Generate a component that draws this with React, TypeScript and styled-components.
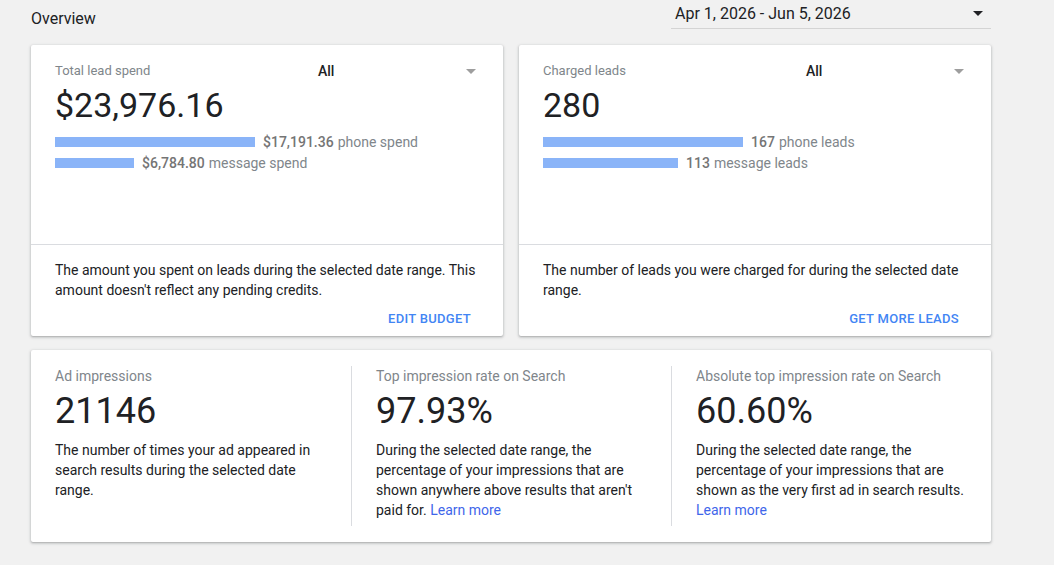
import React from 'react';
import styled, { createGlobalStyle } from 'styled-components';

const GlobalStyle = createGlobalStyle`
  html, body {
    margin: 0;
    padding: 0;
    background: #f1f1f1;
    font-family: Roboto, "Liberation Sans", Arial, sans-serif;
    color: #202124;
  }
`;

const Page = styled.div`
  width: 960px;
  padding: 0 0 0 31px;
  min-height: 565px;
`;

const Header = styled.div`
  display: flex;
  justify-content: space-between;
  align-items: flex-start;
  height: 29px;
`;

const Title = styled.div`
  font-size: 16px;
  line-height: 20px;
  padding-top: 9px;
  color: #202124;
`;

const DateSelect = styled.div`
  width: 320px;
  height: 29px;
  box-sizing: border-box;
  border-bottom: 1px solid #d4d4d4;
  display: flex;
  align-items: center;
  justify-content: space-between;
  padding: 0 8px 1px 4px;
  font-size: 16px;
  color: #202124;
`;

const Caret = styled.span<{ $color: string }>`
  width: 0;
  height: 0;
  border-left: 5px solid transparent;
  border-right: 5px solid transparent;
  border-top: 5px solid ${p => p.$color};
`;

const CardRow = styled.div`
  display: grid;
  grid-template-columns: 472px 472px;
  gap: 16px;
  margin-top: 16px;
`;

const Card = styled.div`
  background: #fff;
  border-radius: 2px;
  box-shadow: 0 1px 2px rgba(60, 64, 67, 0.3), 0 1px 3px 1px rgba(60, 64, 67, 0.12);
`;

const CardTop = styled.div`
  height: 200px;
  box-sizing: border-box;
  padding: 16px 24px 0;
  border-bottom: 1px solid #dadce0;
`;

const TopLine = styled.div`
  display: grid;
  grid-template-columns: 263px 1fr auto;
  align-items: center;
  height: 20px;
`;

const Label = styled.div<{ $size?: number }>`
  font-size: ${p => p.$size ?? 13}px;
  line-height: 20px;
  color: #80868b;
`;

const Filter = styled.div`
  font-size: 14px;
  font-weight: 500;
  color: #202124;
`;

const FilterCaret = styled(Caret)`
  margin-right: 3px;
`;

const BigValue = styled.div<{ $size: number }>`
  font-size: ${p => p.$size}px;
  line-height: ${p => p.$size + 6}px;
  margin-top: 4px;
  color: #202124;
`;

const Bars = styled.div`
  margin-top: 7px;
  display: flex;
  flex-direction: column;
  gap: 1px;
`;

const BarRow = styled.div`
  display: flex;
  align-items: center;
  height: 20px;
  font-size: 14px;
  color: #80868b;
`;

const Bar = styled.div`
  height: 10px;
  background: #8ab4f8;
  margin-right: 8px;
`;

const Strong = styled.b`
  font-weight: 500;
  color: #757575;
  margin-right: 4px;
`;

const CardFooter = styled.div`
  padding: 15px 24px 0;
`;

const Text = styled.p`
  margin: 0;
  font-size: 14px;
  line-height: 20px;
  color: #202124;
`;

const Actions = styled.div`
  display: flex;
  justify-content: flex-end;
`;

const TextButton = styled.button`
  border: none;
  background: none;
  height: 36px;
  padding: 0 8px;
  font-family: inherit;
  font-size: 13px;
  font-weight: 500;
  letter-spacing: 0.3px;
  color: #4285f4;
  text-transform: uppercase;
  cursor: pointer;
`;

const StatsCard = styled(Card)`
  margin-top: 14px;
  display: grid;
  grid-template-columns: repeat(3, 1fr);
  padding: 16px 0;
`;

const Stat = styled.div`
  padding: 0 24px 6px;
  & + & {
    border-left: 1px solid #dadce0;
  }
`;

const StatValue = styled(BigValue)`
  margin-bottom: 8px;
`;

const Link = styled.a`
  color: #3f66ea;
  text-decoration: none;
`;

interface BarItem {
  value: number;
  label: string;
  suffix: string;
}

interface MetricCardProps {
  title: string;
  value: string;
  bars: BarItem[];
  description: string;
  action: string;
}

const MetricCard = ({ title, value, bars, description, action }: MetricCardProps): JSX.Element => {
  const max = Math.max(...bars.map(b => b.value));
  return (
    <Card>
      <CardTop>
        <TopLine>
          <Label>{title}</Label>
          <Filter>All</Filter>
          <FilterCaret $color="#9e9e9e" />
        </TopLine>
        <BigValue $size={34}>{value}</BigValue>
        <Bars>
          {bars.map(b => (
            <BarRow key={b.suffix}>
              <Bar style={{ width: `${Math.round((b.value / max) * 200)}px` }} />
              <Strong>{b.label}</Strong>
              {b.suffix}
            </BarRow>
          ))}
        </Bars>
      </CardTop>
      <CardFooter>
        <Text>{description}</Text>
        <Actions>
          <TextButton>{action}</TextButton>
        </Actions>
      </CardFooter>
    </Card>
  );
};

const App = (): JSX.Element => {
  return (
    <Page>
      <GlobalStyle />
      <Header>
        <Title>Overview</Title>
        <DateSelect>
          <span>Apr 1, 2026 - Jun 5, 2026</span>
          <Caret $color="#202124" />
        </DateSelect>
      </Header>
      <CardRow>
        <MetricCard
          title="Total lead spend"
          value="$23,976.16"
          bars={[
            { value: 17191.36, label: '$17,191.36', suffix: 'phone spend' },
            { value: 6784.8, label: '$6,784.80', suffix: 'message spend' },
          ]}
          description="The amount you spent on leads during the selected date range. This amount doesn't reflect any pending credits."
          action="Edit budget"
        />
        <MetricCard
          title="Charged leads"
          value="280"
          bars={[
            { value: 167, label: '167', suffix: 'phone leads' },
            { value: 113, label: '113', suffix: 'message leads' },
          ]}
          description="The number of leads you were charged for during the selected date range."
          action="Get more leads"
        />
      </CardRow>
      <StatsCard>
        <Stat>
          <Label $size={14}>Ad impressions</Label>
          <StatValue $size={36}>21146</StatValue>
          <Text>The number of times your ad appeared in search results during the selected date range.</Text>
        </Stat>
        <Stat>
          <Label $size={14}>Top impression rate on Search</Label>
          <StatValue $size={36}>97.93%</StatValue>
          <Text>
            During the selected date range, the percentage of your impressions that are shown anywhere above
            results that aren't paid for. <Link href="#">Learn more</Link>
          </Text>
        </Stat>
        <Stat>
          <Label $size={14}>Absolute top impression rate on Search</Label>
          <StatValue $size={36}>60.60%</StatValue>
          <Text>
            During the selected date range, the percentage of your impressions that are shown as the very first ad
            in search results. <Link href="#">Learn more</Link>
          </Text>
        </Stat>
      </StatsCard>
    </Page>
  );
};

export default App;
